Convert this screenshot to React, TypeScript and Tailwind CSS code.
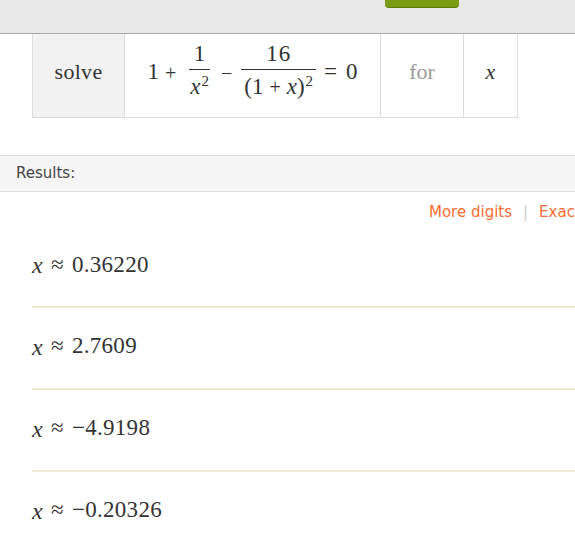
import type { ReactNode } from 'react'

const serif = { fontFamily: '"Liberation Serif", "Times New Roman", serif' }
const sans = { fontFamily: '"DejaVu Sans", Verdana, sans-serif' }

function Frac({ num, den, className = '' }: { num: ReactNode; den: ReactNode; className?: string }) {
  return (
    <span className={`mb-[6px] inline-flex flex-col items-center leading-none ${className}`}>
      <span className="px-[1px] pb-[4px]">{num}</span>
      <span className="w-full border-t-[1.5px] border-[#333]" />
      <span className="px-[1px] pt-[5px]">{den}</span>
    </span>
  )
}

const results = ['0.36220', '2.7609', '\u22124.9198', '\u22120.20326']

export default function App() {
  return (
    <div className="h-[558px] w-[575px] overflow-hidden bg-white">
      {/* Top bar */}
      <div className="h-[34px] border-b border-[#a9a9a9] bg-[#e8e8e8] pl-[385px]">
        <div className="h-[8px] w-[74px] rounded-b-[4px] border-b border-[#5f7d0c] bg-[#7a9c12]" />
      </div>

      {/* Input table */}
      <div className="ml-[32px] flex h-[84px] w-[486px] border-x border-b border-[#dcdcdc] text-[22px] text-[#333]" style={serif}>
        <div className="flex w-[92px] items-center justify-center border-r border-[#dcdcdc] bg-[#f2f2f2] pb-[9px] tracking-[0.3px]">
          solve
        </div>
        <div className="flex w-[256px] items-center justify-center border-r border-[#dcdcdc] pb-[6px] text-[23px]">
          <span>1</span>
          <span className="ml-[6px] text-[20px]">+</span>
          <Frac
            className="ml-[13px] mr-[11px]"
            num={<span>1</span>}
            den={
              <span>
                <i>x</i>
                <sup className="ml-[1px] text-[15px]">2</sup>
              </span>
            }
          />
          <span className="text-[20px]">&minus;</span>
          <Frac
            className="ml-[9px] mr-[8px]"
            num={<span className="tracking-[1px]">16</span>}
            den={
              <span className="px-[2px]">
                (1<span className="mx-[6px] text-[20px]">+</span>
                <i>x</i>)<sup className="ml-[1px] text-[15px]">2</sup>
              </span>
            }
          />
          <span>=</span>
          <span className="ml-[9px]">0</span>
        </div>
        <div className="flex w-[83px] items-center justify-center border-r border-[#dcdcdc] pb-[9px] text-[#9a9a9a]">
          for
        </div>
        <div className="flex flex-1 items-center justify-center pb-[9px]">
          <i>x</i>
        </div>
      </div>

      {/* Results header */}
      <div
        className="mt-[37px] flex h-[37px] items-center border-y border-[#dddddd] bg-[#f5f5f5] pb-[1px] pl-[16px] text-[15px] text-[#444]"
        style={sans}
      >
        Results:
      </div>

      <div className="w-[680px]">
        <div className="flex h-[38px] items-center pl-[429px] pt-[2px] text-[15px] text-[#f96c33]" style={sans}>
          <span>More digits</span>
          <span className="mx-[11px] text-[#cccccc]">|</span>
          <span>Exact form</span>
        </div>

        <div className="ml-[32px]" style={serif}>
          {results.map((r, i) => (
            <div
              key={r}
              className={`flex items-center text-[23px] text-[#333] tracking-[0.3px] ${
                i > 0 ? 'h-[77px] pb-[3px] border-t-2 border-[#efe9d9] box-content' : 'h-[76px] pb-[6px]'
              }`}
            >
              <i className="text-[24px]">x</i>
              <span className="mx-[8px]">&asymp;</span>
              <span>{r}</span>
            </div>
          ))}
        </div>
      </div>
    </div>
  )
}
